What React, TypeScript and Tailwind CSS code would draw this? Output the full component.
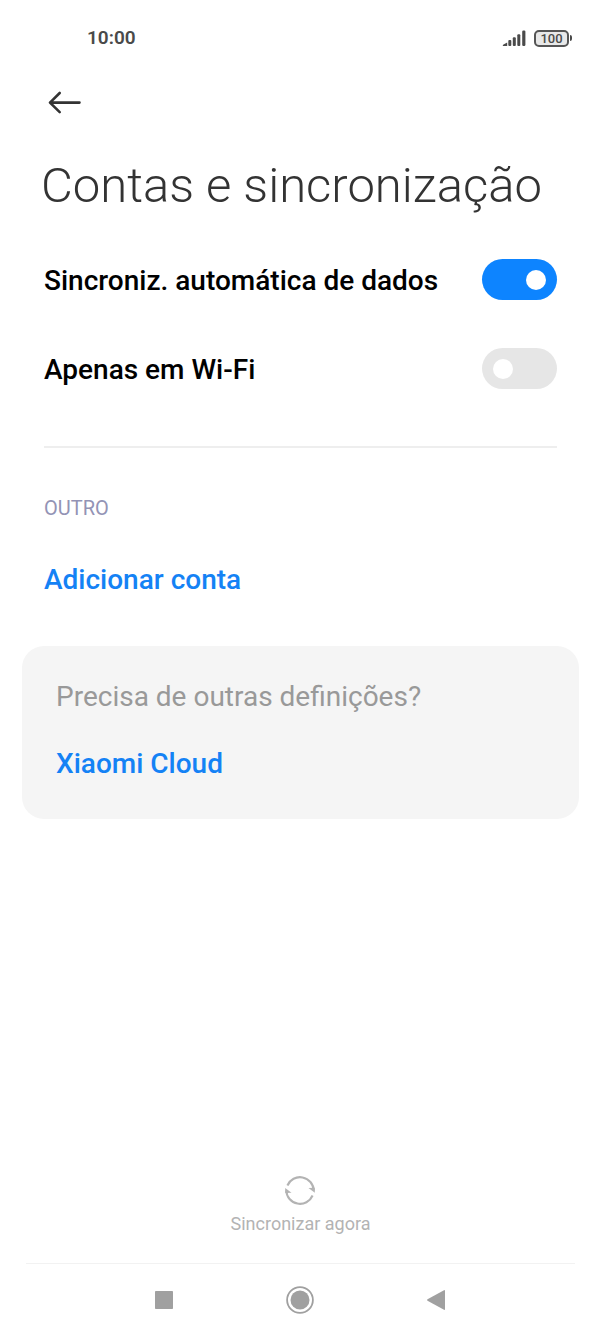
import { useState } from "react";

type SwitchRowProps = {
  id: string;
  label: string;
  checked: boolean;
  onChange: (value: boolean) => void;
};

function SwitchRow({ id, label, checked, onChange }: SwitchRowProps) {
  return (
    <div className="flex h-[89px] items-center justify-between gap-4">
      <label htmlFor={id} className="pt-0.5 text-[28px] leading-8 font-medium text-black">
        {label}
      </label>
      <input
        id={id}
        type="checkbox"
        role="switch"
        checked={checked}
        onChange={(e) => onChange(e.target.checked)}
        className="flex h-[41px] w-[75px] shrink-0 appearance-none items-center justify-start rounded-full bg-[#e6e6e6] px-[11px] before:block before:size-5 before:rounded-full before:bg-white before:content-[''] checked:justify-end checked:bg-[#0d84ff]"
      />
    </div>
  );
}

function StatusBar() {
  return (
    <header className="flex h-[76px] items-center justify-between pr-[29px] pl-[87px] text-[#4a4a4a]">
      <time className="text-[19px] leading-6 font-semibold">10:00</time>
      <div className="flex items-center gap-2">
        <svg width="24" height="18" viewBox="0 0 24 18" fill="currentColor" aria-label="Sinal">
          <path d="M1 17q-.8-1 .5-1.600l3.700-1.900v3.500z" />
          <rect x="6.300" y="11" width="3" height="6" rx="1" />
          <rect x="10.800" y="8.300" width="3" height="8.700" rx="1" />
          <rect x="15.300" y="5.300" width="3" height="11.700" rx="1" />
          <rect x="20.200" y="1.500" width="3.200" height="15.500" rx="1.200" />
        </svg>
        <div className="flex items-center gap-px" aria-label="Bateria">
          <span className="flex h-[17px] w-[35px] items-center justify-center rounded-[5px] border-2 border-[#555] bg-[#e8e8e8] text-[13px] leading-none font-medium">
            100
          </span>
          <span className="h-[6px] w-[2px] rounded-r-sm bg-[#4a4a4a]" />
        </div>
      </div>
    </header>
  );
}

function SyncIcon() {
  return (
    <svg width="32" height="32" viewBox="0 0 32 32" fill="none" aria-hidden="true">
      <path d="M3.400 11.500A13.700 13.700 0 0 1 29.700 16.500" stroke="#b3b3b3" strokeWidth="2.100" />
      <path d="M28.600 21.500A13.700 13.700 0 0 1 2.300 16.500" stroke="#b3b3b3" strokeWidth="2.100" />
      <path d="M24.500 14l6.300-.3v5z" fill="#b3b3b3" />
      <path d="M1.200 14l6.300 4.700-6.300.300z" fill="#b3b3b3" />
    </svg>
  );
}

function NavBar() {
  return (
    <nav className="mx-[26px] flex h-[73px] items-center justify-center gap-[94px] border-t border-[#f2f2f2] pr-0.5 text-[#a0a0a0]">
      <button type="button" aria-label="Recentes" className="flex w-[42px] justify-center">
        <svg width="20" height="20" viewBox="0 0 20 20" fill="currentColor">
          <rect x="1" y="1" width="18" height="18" rx="0.800" />
        </svg>
      </button>
      <button type="button" aria-label="Início" className="flex w-[42px] justify-center">
        <svg width="28" height="28" viewBox="0 0 28 28" fill="none">
          <circle cx="14" cy="14" r="12.900" stroke="currentColor" strokeWidth="1.800" />
          <circle cx="14" cy="14" r="9.500" fill="currentColor" />
        </svg>
      </button>
      <button type="button" aria-label="Voltar atrás" className="flex w-[42px] justify-center">
        <svg width="20" height="22" viewBox="0 0 20 22" fill="currentColor">
          <path d="M1.500 10.300L18 1.200q1-.5 1 .6v18.400q0 1.100-1 .6L1.500 11.700q-1-.7 0-1.400z" />
        </svg>
      </button>
    </nav>
  );
}

export default function App() {
  const [autoSync, setAutoSync] = useState(true);
  const [wifiOnly, setWifiOnly] = useState(false);

  return (
    <div className="flex min-h-screen flex-col bg-white font-[Roboto,sans-serif]">
      <StatusBar />
      <main className="flex flex-1 flex-col">
        <div className="px-11">
          <button type="button" aria-label="Voltar" className="flex h-[52px] items-center">
            <svg width="40" height="28" viewBox="0 0 40 28" fill="none" stroke="#333" strokeWidth="2.600" strokeLinecap="round" strokeLinejoin="round">
              <path d="M35.500 14.600H6M15.700 5L6 14.600l9.700 9.600" />
            </svg>
          </button>
          <h1 className="-ml-[3px] pt-7 pb-[19px] text-[49px] leading-[60px] font-light whitespace-nowrap text-[#333]">
            Contas e sincronização
          </h1>
          <SwitchRow id="auto-sync" label="Sincroniz. automática de dados" checked={autoSync} onChange={setAutoSync} />
          <SwitchRow id="wifi-only" label="Apenas em Wi-Fi" checked={wifiOnly} onChange={setWifiOnly} />
          <hr className="mt-[33px] border-t-2 border-[#eee]" />
          <h2 className="mt-12 text-[20px] leading-6 text-[#9393b5]">OUTRO</h2>
          <a href="#adicionar" className="mt-11 block text-[28px] leading-8 font-medium text-[#1482f5]">
            Adicionar conta
          </a>
        </div>
        <section className="mx-[22px] mt-[50px] rounded-[22px] bg-[#f5f5f5] px-[34px] pt-[35px] pb-[39px]">
          <p className="text-[28px] leading-8 text-[#999]">Precisa de outras definições?</p>
          <a href="#cloud" className="mt-[35px] block text-[28px] leading-8 font-medium text-[#1482f5]">
            Xiaomi Cloud
          </a>
        </section>
      </main>
      <button type="button" className="mb-[27px] flex flex-col items-center gap-[6px] self-center text-[18px] leading-6 text-[#b3b3b3]">
        <SyncIcon />
        Sincronizar agora
      </button>
      <NavBar />
    </div>
  );
}
